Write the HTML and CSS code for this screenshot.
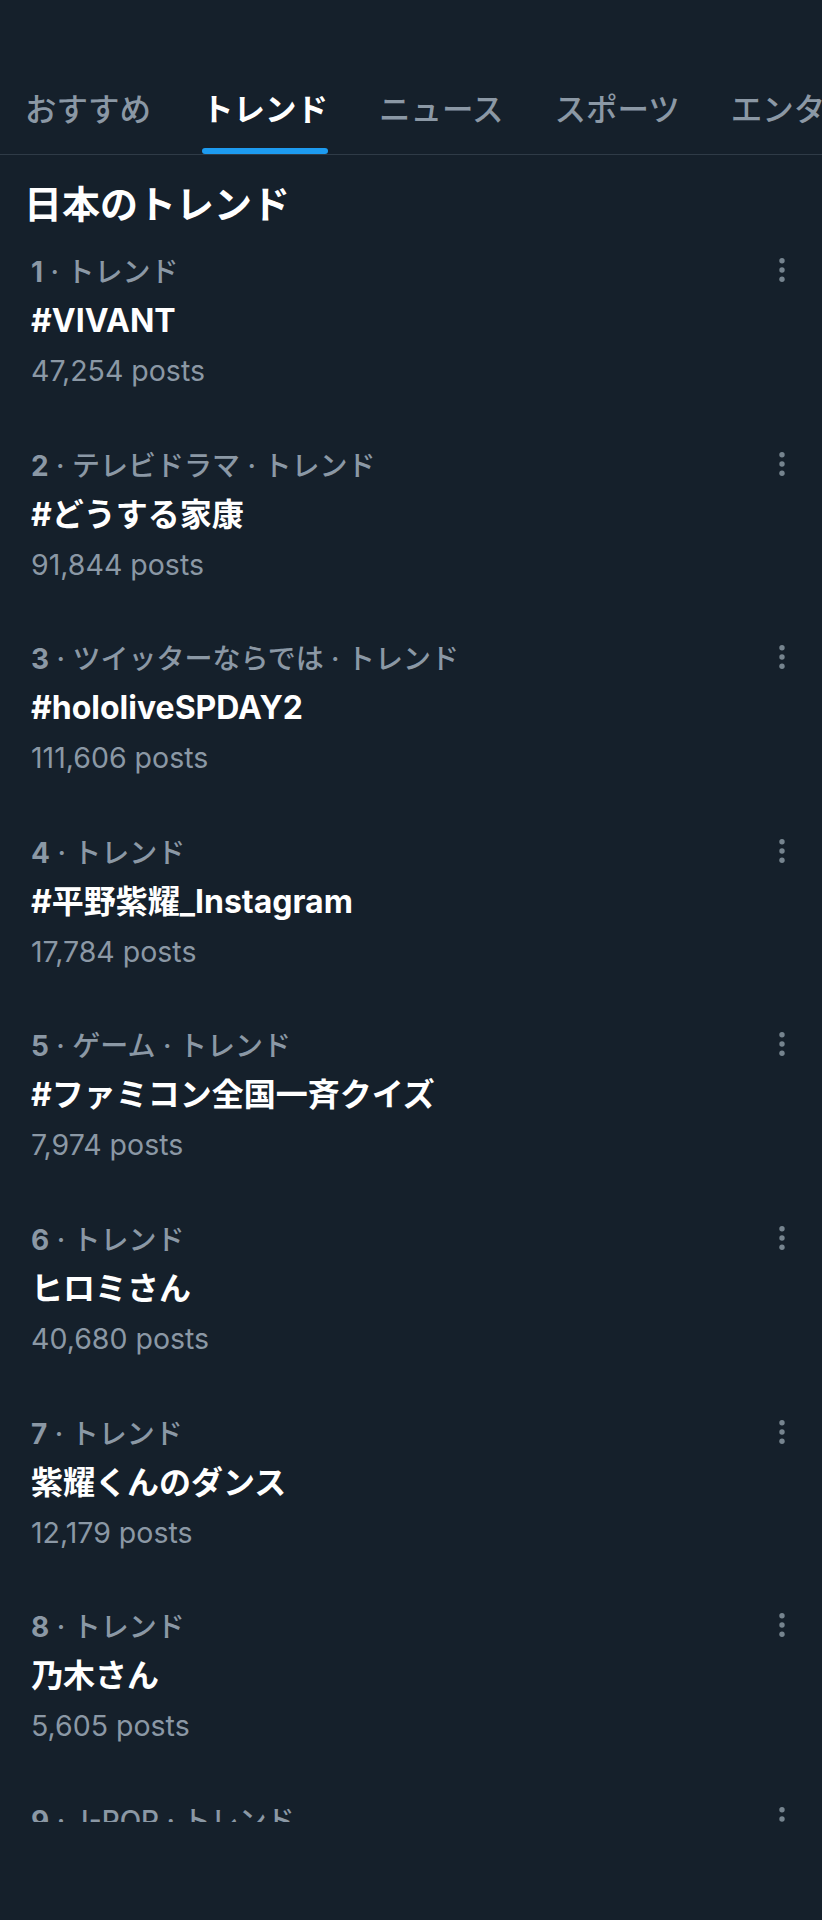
FILE: index.html
```html
<!DOCTYPE html>
<html lang="ja">
<head>
    <meta charset="UTF-8">
    <meta name="viewport" content="width=device-width, initial-scale=1.0">
    <title>トレンド</title>
    <link rel="stylesheet" href="styles.css">
</head>
<body>
    <div class="topbar"></div>

    <nav class="tabs">
        <span class="tab">おすすめ</span>
        <span class="tab active">トレンド</span>
        <span class="tab">ニュース</span>
        <span class="tab">スポーツ</span>
        <span class="tab">エンタメ</span>
    </nav>

    <h1 class="heading">日本のトレンド</h1>

    <div class="list">
        <div class="trend">
            <div class="meta"><span><b>1</b> · トレンド</span><svg class="more" viewBox="0 0 24 24"><circle cx="12" cy="2.7" r="2.7"/><circle cx="12" cy="12" r="2.7"/><circle cx="12" cy="21.3" r="2.7"/></svg></div>
            <div class="title">#VIVANT</div>
            <div class="count">47,254 posts</div>
        </div>
        <div class="trend">
            <div class="meta"><span><b>2</b> · テレビドラマ · トレンド</span><svg class="more" viewBox="0 0 24 24"><circle cx="12" cy="2.7" r="2.7"/><circle cx="12" cy="12" r="2.7"/><circle cx="12" cy="21.3" r="2.7"/></svg></div>
            <div class="title">#どうする家康</div>
            <div class="count">91,844 posts</div>
        </div>
        <div class="trend">
            <div class="meta"><span><b>3</b> · ツイッターならでは · トレンド</span><svg class="more" viewBox="0 0 24 24"><circle cx="12" cy="2.7" r="2.7"/><circle cx="12" cy="12" r="2.7"/><circle cx="12" cy="21.3" r="2.7"/></svg></div>
            <div class="title">#hololiveSPDAY2</div>
            <div class="count">111,606 posts</div>
        </div>
        <div class="trend">
            <div class="meta"><span><b>4</b> · トレンド</span><svg class="more" viewBox="0 0 24 24"><circle cx="12" cy="2.7" r="2.7"/><circle cx="12" cy="12" r="2.7"/><circle cx="12" cy="21.3" r="2.7"/></svg></div>
            <div class="title">#平野紫耀_Instagram</div>
            <div class="count">17,784 posts</div>
        </div>
        <div class="trend">
            <div class="meta"><span><b>5</b> · ゲーム · トレンド</span><svg class="more" viewBox="0 0 24 24"><circle cx="12" cy="2.7" r="2.7"/><circle cx="12" cy="12" r="2.7"/><circle cx="12" cy="21.3" r="2.7"/></svg></div>
            <div class="title">#ファミコン全国一斉クイズ</div>
            <div class="count">7,974 posts</div>
        </div>
        <div class="trend">
            <div class="meta"><span><b>6</b> · トレンド</span><svg class="more" viewBox="0 0 24 24"><circle cx="12" cy="2.7" r="2.7"/><circle cx="12" cy="12" r="2.7"/><circle cx="12" cy="21.3" r="2.7"/></svg></div>
            <div class="title">ヒロミさん</div>
            <div class="count">40,680 posts</div>
        </div>
        <div class="trend">
            <div class="meta"><span><b>7</b> · トレンド</span><svg class="more" viewBox="0 0 24 24"><circle cx="12" cy="2.7" r="2.7"/><circle cx="12" cy="12" r="2.7"/><circle cx="12" cy="21.3" r="2.7"/></svg></div>
            <div class="title">紫耀くんのダンス</div>
            <div class="count">12,179 posts</div>
        </div>
        <div class="trend">
            <div class="meta"><span><b>8</b> · トレンド</span><svg class="more" viewBox="0 0 24 24"><circle cx="12" cy="2.7" r="2.7"/><circle cx="12" cy="12" r="2.7"/><circle cx="12" cy="21.3" r="2.7"/></svg></div>
            <div class="title">乃木さん</div>
            <div class="count">5,605 posts</div>
        </div>
        <div class="trend">
            <div class="meta"><span><b>9</b> · J-POP · トレンド</span><svg class="more" viewBox="0 0 24 24"><circle cx="12" cy="2.7" r="2.7"/><circle cx="12" cy="12" r="2.7"/><circle cx="12" cy="21.3" r="2.7"/></svg></div>
            <div class="title">#J-POP</div>
            <div class="count">9,999 posts</div>
        </div>
    </div>
</body>
</html>
```

FILE: styles.css
```css
body {
    margin: 0;
    width: 822px;
    height: 1920px;
    overflow: hidden;
    background: #15202b;
    color: #fff;
    font-family: Inter, "Noto Sans CJK JP", sans-serif;
}
.topbar {
    height: 90px;
}
.tabs {
    display: flex;
    gap: 51px;
    padding: 0 25px;
    border-bottom: 1px solid #2f3b47;
    overflow: hidden;
    white-space: nowrap;
}
.tab {
    position: relative;
    flex-shrink: 0;
    font-size: 31.5px;
    line-height: 40px;
    padding-bottom: 24px;
    font-weight: 500;
    color: #8b98a5;
}
.tab.active {
    color: #fff;
    font-weight: 700;
}
.tab.active::after {
    content: "";
    position: absolute;
    left: 0;
    right: 0;
    bottom: 0;
    height: 6px;
    border-radius: 3px;
    background: #1d9bf0;
}
.heading {
    margin: 25px 0 2px;
    padding-left: 24px;
    font-size: 38px;
    line-height: 48px;
    font-weight: 700;
}
.list {
    height: 1592px;
    overflow: hidden;
}
.trend {
    height: 193.6px;
    box-sizing: border-box;
    padding: 20px 28px 0 31px;
}
.meta {
    display: flex;
    justify-content: space-between;
    align-items: center;
    height: 40px;
    font-size: 28px;
    font-weight: 500;
    color: #8b98a5;
}
.meta b {
    font-weight: 700;
}
.more {
    width: 24px;
    height: 24px;
    fill: #76848f;
}
.title {
    font-size: 32px;
    line-height: 62px;
    font-weight: 700;
}
.count {
    font-size: 28.5px;
    line-height: 38px;
    color: #8b98a5;
}
```
